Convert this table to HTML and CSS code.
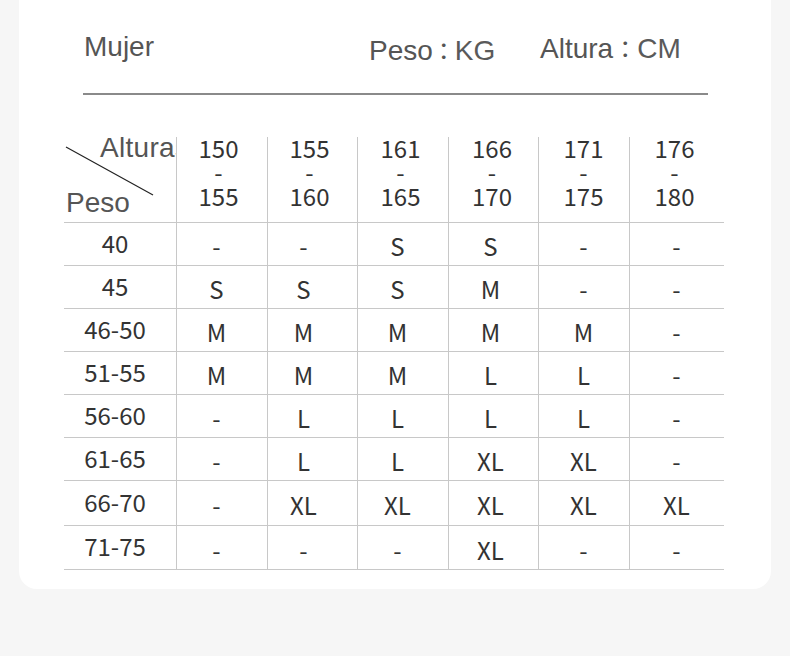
FILE: index.html
```html
<!DOCTYPE html>
<html>
<head>
<meta charset="utf-8">
<link rel="stylesheet" href="styles.css">
</head>
<body>
<div class="card">
  <div class="head">
    <div class="h-item mujer">Mujer</div>
    <div class="h-item peso">Peso<span class="colon">：</span><span class="unit">KG</span></div>
    <div class="h-item altura">Altura<span class="colon">：</span><span class="unit">CM</span></div>
  </div>
  <div class="rule"></div>
  <div class="table">
    <div class="row hrow">
      <div class="corner">
        <svg class="diag" width="112" height="85" viewBox="0 0 112 85"><line x1="2" y1="10" x2="89" y2="58" stroke="#222" stroke-width="1.2"/></svg>
        <div class="c-alt">Alturas</div>
        <div class="c-peso">Peso</div>
      </div>
      <div class="hc"><div>150</div><div>-</div><div>155</div></div>
      <div class="hc"><div>155</div><div>-</div><div>160</div></div>
      <div class="hc"><div>161</div><div>-</div><div>165</div></div>
      <div class="hc"><div>166</div><div>-</div><div>170</div></div>
      <div class="hc"><div>171</div><div>-</div><div>175</div></div>
      <div class="hc"><div>176</div><div>-</div><div>180</div></div>
    </div>
    <div class="row"><div class="w">40</div><div>-</div><div>-</div><div>S</div><div>S</div><div>-</div><div>-</div></div>
    <div class="row"><div class="w">45</div><div>S</div><div>S</div><div>S</div><div>M</div><div>-</div><div>-</div></div>
    <div class="row"><div class="w">46-50</div><div>M</div><div>M</div><div>M</div><div>M</div><div>M</div><div>-</div></div>
    <div class="row"><div class="w">51-55</div><div>M</div><div>M</div><div>M</div><div>L</div><div>L</div><div>-</div></div>
    <div class="row"><div class="w">56-60</div><div>-</div><div>L</div><div>L</div><div>L</div><div>L</div><div>-</div></div>
    <div class="row"><div class="w">61-65</div><div>-</div><div>L</div><div>L</div><div>XL</div><div>XL</div><div>-</div></div>
    <div class="row tall"><div class="w">66-70</div><div>-</div><div>XL</div><div>XL</div><div>XL</div><div>XL</div><div>XL</div></div>
    <div class="row last"><div class="w">71-75</div><div>-</div><div>-</div><div>-</div><div>XL</div><div>-</div><div>-</div></div>
  </div>
</div>
</body>
</html>
```
FILE: styles.css
```css
html, body {
  margin: 0;
  padding: 0;
  background: #f6f6f6;
}
.card {
  margin-left: 19px;
  width: 752px;
  background: #ffffff;
  border-radius: 0 0 18px 18px;
  padding-bottom: 19px;
  box-sizing: border-box;
}
.head {
  display: flex;
  height: 93px;
  padding-left: 65px;
  font-family: "Liberation Sans", Arial, sans-serif;
  font-size: 28px;
  line-height: 32px;
  color: #555;
}
.h-item {
  white-space: nowrap;
}
.mujer {
  width: 285px;
  margin-top: 31px;
}
.peso {
  width: 171px;
  margin-top: 35px;
}
.altura {
  margin-top: 33px;
}
.colon {
  font-family: "Noto Sans CJK TC", sans-serif;
  font-size: 24px;
  line-height: 24px;
  margin: 0 -1px;
}
.altura .colon {
  margin: 0;
}
.unit {
  color: #5a5a5a;
}
.rule {
  margin-left: 64px;
  width: 625px;
  height: 2px;
  background: #8a8a8a;
}
.table {
  margin-top: 42px;
  margin-left: 45px;
  width: 660px;
  font-family: "Noto Sans CJK SC", "Noto Sans", sans-serif;
  color: #333;
}
.row {
  display: grid;
  grid-template-columns: 112px 91px 90px 91px 90px 91px 95px;
  height: 43px;
}
.row.tall { height: 45px; }
.row.last { height: 44px; }
.row.hrow { height: 86px; }
.row > div {
  box-sizing: border-box;
  border-bottom: 1px solid #c8c8c8;
  text-align: center;
  font-size: 24px;
  display: flex;
  align-items: center;
  justify-content: center;
  padding-top: 3px;
}
.row > div + div {
  border-left: 1px solid #c8c8c8;
}
.row > .w {
  padding-top: 0;
  padding-bottom: 4px;
  padding-right: 10px;
}
.row > div:nth-child(2) { padding-right: 11px; }
.row > div:nth-child(3) { padding-right: 18px; }
.row > div:nth-child(4) { padding-right: 11px; }
.row > div:nth-child(5) { padding-right: 6px; }
.row > div:nth-child(6) { padding-right: 1px; }
.row > div:nth-child(7) { padding-right: 1px; }

.hrow > .hc {
  display: block;
  font-size: 24px;
  line-height: 24px;
  padding-top: 0;
}
.hrow > .hc > div:first-child { margin-top: -1px; }
.hrow > .hc:nth-child(2) { padding-right: 7px; }
.hrow > .hc:nth-child(3) { padding-right: 6px; }
.hrow > .hc:nth-child(4) { padding-right: 5px; }
.hrow > .hc:nth-child(5) { padding-right: 3px; }
.hrow > .hc:nth-child(6) { padding-right: 1px; }
.hrow > .hc:nth-child(7) { padding-right: 5px; }

.hrow > .corner {
  display: block;
  position: relative;
  overflow: hidden;
  padding: 0;
  text-align: left;
  font-family: "Liberation Sans", Arial, sans-serif;
  font-size: 28px;
  line-height: 32px;
  color: #555;
}
.diag {
  position: absolute;
  left: 0;
  top: 0;
}
.c-alt {
  margin-top: -5px;
  padding-left: 36px;
  letter-spacing: 0.3px;
  white-space: nowrap;
}
.c-peso {
  margin-top: 23px;
  padding-left: 2px;
}
```
